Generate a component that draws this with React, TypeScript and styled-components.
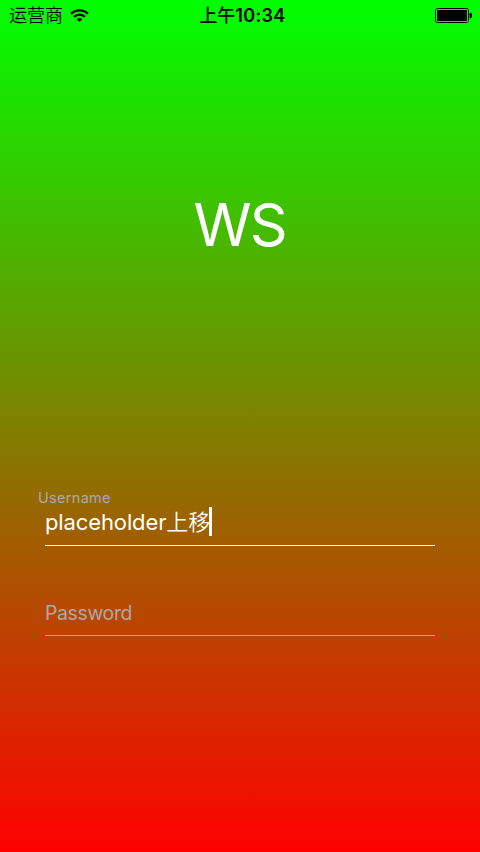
import React from "react";
import styled, { createGlobalStyle } from "styled-components";

const Global = createGlobalStyle`
  * { box-sizing: border-box; }
  body { margin: 0; font-family: Inter, "Noto Sans CJK SC", sans-serif; }
`;
const Screen = styled.main`
  width: 480px;
  height: 852px;
  display: flex;
  flex-direction: column;
  overflow: hidden;
  background: linear-gradient(#00ff00, #ff0000);
`;
const StatusBar = styled.header`
  height: 30px;
  flex: none;
  display: grid;
  grid-template-columns: 1fr auto 1fr;
  align-items: center;
  padding: 0 8px 0 13px;
  color: #000;
  font-size: 18px;
  line-height: 30px;
`;
const Carrier = styled.div`
  display: flex;
  align-items: center;
  gap: 7px;
  margin-left: -4px;
  font-weight: 350;
`;
const Clock = styled.time`
  display: flex;
  font-weight: 600;
  letter-spacing: 0.35px;
  padding-top: 1px;
`;
const Meridiem = styled.span`
  font-weight: 500;
  letter-spacing: 0;
`;
const Battery = styled.svg`
  justify-self: end;
`;
const Title = styled.h1`
  margin: 159px 0 0;
  padding-right: 1px;
  height: 72px;
  line-height: 72px;
  text-align: center;
  color: #fff;
  font-weight: 400;
  font-size: 59px;
  letter-spacing: -2px;
`;
const Form = styled.form`
  margin: 227px 45px 0;
`;
const Field = styled.div<{ $active?: boolean }>`
  height: ${(p) => (p.$active ? 58 : 90)}px;
  display: flex;
  flex-direction: column;
  justify-content: flex-end;
  border-bottom: 1px solid ${(p) => (p.$active ? "#fff" : "#aaa")};
`;
const Floating = styled.label`
  margin-left: -7px;
  font-size: 14.5px;
  line-height: 18px;
  letter-spacing: 0.3px;
  color: #aaa;
`;
const Value = styled.div`
  display: flex;
  align-items: center;
  height: 30px;
  margin-bottom: 8px;
  font-size: 22px;
  line-height: 30px;
  letter-spacing: -0.12px;
  color: #fff;
`;
const Han = styled.span`
  font-weight: 350;
  letter-spacing: 0;
`;
const Caret = styled.span`
  width: 3px;
  height: 29px;
  margin: -1px 0 0 -1px;
  background: #fff;
`;
const Placeholder = styled.label`
  height: 30px;
  margin-bottom: 7px;
  font-size: 19.5px;
  line-height: 30px;
  letter-spacing: -0.4px;
  color: #aaa;
`;

export default function App() {
  return (
    <Screen>
      <Global />
      <StatusBar>
        <Carrier>
          <span>运营商</span>
          <svg width="19" height="14" viewBox="0 0 20 15" fill="none" stroke="#000" strokeWidth="2.4">
            <path d="M1 5.2a12.8 12.8 0 0 1 18 0M4.2 8.4a8.2 8.2 0 0 1 11.6 0" />
            <path d="M10 14l-3-3a4.3 4.3 0 0 1 6 0z" fill="#000" stroke="none" />
          </svg>
        </Carrier>
        <Clock><Meridiem>上午</Meridiem>10:34</Clock>
        <Battery width="37" height="15" viewBox="0 0 37 15">
          <rect x=".5" y=".5" width="33" height="14" rx="2" fill="none" stroke="#000" />
          <rect x="2" y="2" width="30" height="11" rx=".6" fill="#000" />
          <path d="M34.6 4.8a2.7 2.7 0 0 1 0 5.4z" fill="#000" />
        </Battery>
      </StatusBar>
      <Title>WS</Title>
      <Form>
        <Field $active>
          <Floating>Username</Floating>
          <Value>placeholder<Han>上移</Han><Caret /></Value>
        </Field>
        <Field>
          <Placeholder>Password</Placeholder>
        </Field>
      </Form>
    </Screen>
  );
}
